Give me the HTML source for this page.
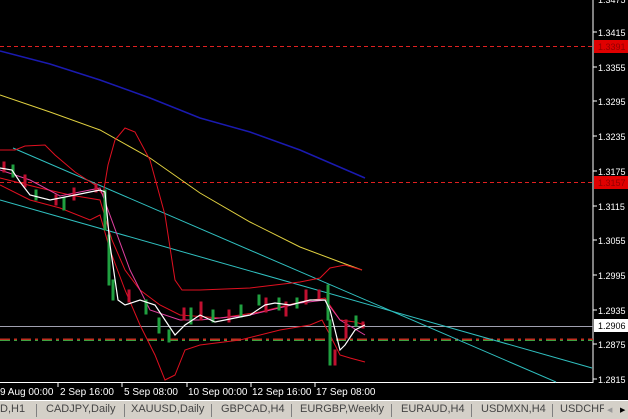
<!DOCTYPE html>
<html><head><meta charset="utf-8"><style>
body{margin:0;width:628px;height:419px;overflow:hidden;background:#000;font-family:"Liberation Sans",sans-serif;}
svg{position:absolute;left:0;top:0}
#tabs{position:absolute;left:0;top:400px;width:628px;height:19px;background:#d4d0c8;border-top:1px solid #fff;box-sizing:border-box;font-size:11px;color:#444}
#tabs span{position:absolute;top:2px;white-space:nowrap}
#tabs i{position:absolute;top:3px;width:1px;height:13px;background:#808080}
</style></head><body>
<svg width="628" height="400" viewBox="0 0 628 400">
<g font-family="Liberation Sans, sans-serif" font-size="10" fill="#fff">
<line x1="593" y1="0" x2="593" y2="383" stroke="#fff"/>
<line x1="0" y1="382.5" x2="593" y2="382.5" stroke="#fff"/>
<g stroke="#fff">
<line x1="593" y1="32" x2="597" y2="32"/><line x1="593" y1="67" x2="597" y2="67"/><line x1="593" y1="101" x2="597" y2="101"/><line x1="593" y1="136" x2="597" y2="136"/><line x1="593" y1="171" x2="597" y2="171"/><line x1="593" y1="206" x2="597" y2="206"/><line x1="593" y1="240" x2="597" y2="240"/><line x1="593" y1="275" x2="597" y2="275"/><line x1="593" y1="310" x2="597" y2="310"/><line x1="593" y1="344" x2="597" y2="344"/><line x1="593" y1="379" x2="597" y2="379"/>
<line x1="58" y1="383" x2="58" y2="387"/><line x1="122" y1="383" x2="122" y2="387"/><line x1="187" y1="383" x2="187" y2="387"/><line x1="251" y1="383" x2="251" y2="387"/><line x1="315" y1="383" x2="315" y2="387"/>
</g>
<g font-size="9">
<text x="598" y="3">1.3475</text>
<text x="598" y="36">1.3415</text>
<text x="598" y="71">1.3355</text>
<text x="598" y="105">1.3295</text>
<text x="598" y="140">1.3235</text>
<text x="598" y="175">1.3175</text>
<text x="598" y="210">1.3115</text>
<text x="598" y="244">1.3055</text>
<text x="598" y="279">1.2995</text>
<text x="598" y="314">1.2935</text>
<text x="598" y="348">1.2875</text>
<text x="598" y="383">1.2815</text>
<rect x="594" y="40" width="34" height="13" fill="#e00000"/>
<text x="598" y="50" fill="#900000">1.3391</text>
<rect x="594" y="176" width="34" height="13" fill="#e00000"/>
<text x="598" y="186" fill="#900000">1.3157</text>
<rect x="594" y="319" width="34" height="13" fill="#fff"/>
<text x="598" y="329" fill="#000">1.2906</text>
</g>
<text x="0" y="395">9 Aug 00:00</text>
<text x="60" y="395">2 Sep 16:00</text>
<text x="124" y="395">5 Sep 08:00</text>
<text x="188" y="395">10 Sep 00:00</text>
<text x="252" y="395">12 Sep 16:00</text>
<text x="316" y="395">17 Sep 08:00</text>
</g>
<line x1="0" y1="46.5" x2="593" y2="46.5" stroke="#e02020" stroke-dasharray="4,3"/>
<line x1="0" y1="182.5" x2="593" y2="182.5" stroke="#e02020" stroke-dasharray="4,3"/>
<line x1="0" y1="326.5" x2="593" y2="326.5" stroke="#a0a0b0"/>
<line x1="0" y1="339.5" x2="593" y2="339.5" stroke="#c03020" stroke-width="2" stroke-dasharray="10,4,3,4"/>
<line x1="0" y1="340.5" x2="593" y2="340.5" stroke="#40a040" stroke-dasharray="10,4,3,4"/>
<polyline fill="none" stroke="#1a1ab0" stroke-width="1.5" points="0,51 50,64 100,80 150,98 200,118 250,132 300,150 365,178"/>
<polyline fill="none" stroke="#e0d040" points="0,95 50,112 100,130 150,158 200,193 250,222 300,247 340,262 362,270"/>
<line x1="13" y1="148" x2="556" y2="382" stroke="#30c0c0"/>
<line x1="0" y1="200" x2="592" y2="368" stroke="#30c0c0"/>
<g fill="none" stroke="#e01020">
<polyline points="0,150 15,150 25,146 45,145 55,155 75,172 95,185 103,195 108,165 115,140 125,128 135,132 150,160 165,215 175,280 182,290 200,290 250,288 300,282 320,278 330,268 345,265 362,270"/>
<polyline points="0,185 30,200 60,208 90,220 100,215 110,250 125,290 140,325 155,355 165,380 175,375 185,350 200,345 240,340 280,330 310,325 322,320 330,335 340,355 350,358 365,362"/>
<polyline points="0,178 40,188 70,195 100,200 112,240 125,270 140,290 160,305 180,315 220,318 260,312 300,302 325,298 340,320 355,322 365,325"/>
<polyline points="0,170 30,180 60,196 100,188 130,270 150,310 180,320 200,320 250,315 300,303 325,300 340,320 365,335" stroke="#e040a0"/>
</g>
<g stroke-width="1">
<g fill="#c01030" stroke="#c01030">
<rect x="3" y="162" width="2" height="10"/><rect x="24" y="175" width="2" height="12"/><rect x="55" y="195" width="2" height="10"/><rect x="73" y="188" width="2" height="12"/><rect x="95" y="184" width="2" height="8"/>
<rect x="128" y="290" width="2" height="12"/><rect x="183" y="308" width="2" height="12"/><rect x="200" y="302" width="2" height="18"/><rect x="228" y="310" width="2" height="12"/><rect x="265" y="298" width="2" height="14"/><rect x="285" y="302" width="2" height="14"/><rect x="305" y="290" width="2" height="14"/><rect x="318" y="290" width="2" height="10"/><rect x="334" y="350" width="2" height="15"/><rect x="345" y="320" width="2" height="18"/><rect x="362" y="322" width="2" height="6"/>
</g>
<g fill="#20a040" stroke="#20a040">
<rect x="12" y="165" width="2" height="12"/><rect x="35" y="190" width="2" height="10"/><rect x="63" y="198" width="2" height="12"/><rect x="104" y="190" width="2" height="40"/><rect x="108" y="235" width="2" height="50"/><rect x="112" y="280" width="2" height="20"/><rect x="145" y="300" width="2" height="14"/><rect x="158" y="318" width="2" height="15"/><rect x="168" y="330" width="2" height="12"/><rect x="190" y="308" width="2" height="16"/><rect x="212" y="310" width="2" height="12"/><rect x="240" y="305" width="2" height="12"/><rect x="258" y="295" width="2" height="10"/><rect x="278" y="298" width="2" height="12"/><rect x="296" y="298" width="2" height="10"/><rect x="327" y="285" width="2" height="35"/><rect x="329" y="320" width="2" height="45"/><rect x="355" y="316" width="2" height="10"/>
</g>
</g>
<polyline fill="none" stroke="#fff" stroke-width="1.2" points="0,168 12,170 20,182 30,195 50,200 75,195 100,190 105,192 110,245 118,300 125,305 140,300 155,305 165,320 175,335 185,325 200,315 215,322 235,318 250,315 265,305 275,303 290,305 310,300 325,300 330,310 340,350 345,345 355,330 365,325"/>
</svg>
<div id="tabs">
<span style="left:0">D,H1</span><i style="left:36px"></i>
<span style="left:46px">CADJPY,Daily</span><i style="left:124px"></i>
<span style="left:131px">XAUUSD,Daily</span><i style="left:211px"></i>
<span style="left:221px">GBPCAD,H4</span><i style="left:291px"></i>
<span style="left:300px">EURGBP,Weekly</span><i style="left:391px"></i>
<span style="left:401px">EURAUD,H4</span><i style="left:471px"></i>
<span style="left:481px">USDMXN,H4</span><i style="left:552px"></i>
<span style="left:560px;width:44px;overflow:hidden">USDCHF</span>
<span style="left:607px;color:#999;font-size:7px;top:5px">◀</span>
<span style="left:620px;color:#000;font-size:7px;top:5px">▶</span>
</div>
</body></html>
